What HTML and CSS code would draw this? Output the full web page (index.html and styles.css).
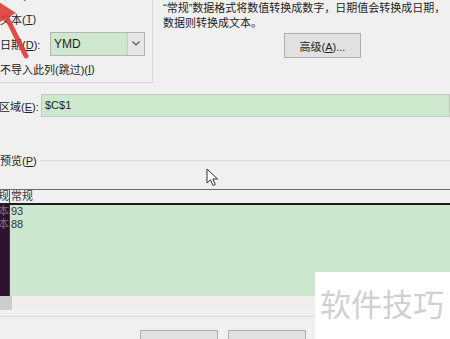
FILE: index.html
```html
<!DOCTYPE html>
<html lang="zh-CN">
<head>
    <meta charset="UTF-8">
    <meta name="viewport" content="width=device-width, initial-scale=1.0">
    <title>文本导入向导</title>
    <link rel="stylesheet" href="styles.css">
</head>
<body>
    <div class="top">
        <div class="format-group">
            <div class="options">
                <div class="opt">常规(<u>G</u>)</div>
                <div class="opt">文本(<u>T</u>)</div>
                <div class="opt">
                    <span class="opt-label">日期(<u>D</u>):</span>
                    <div class="combo">
                        <span class="combo-value">YMD</span>
                        <span class="combo-drop">
                            <svg width="8" height="5" viewBox="0 0 8 5"><path d="M0.5 0.5 L4 4 L7.5 0.5" fill="none" stroke="#555" stroke-width="1.2"/></svg>
                        </span>
                    </div>
                </div>
                <div class="opt">不导入此列(跳过)(<u>I</u>)</div>
            </div>
        </div>
        <div class="info">
            <p>“常规”数据格式将数值转换成数字，日期值会转换成日期，</p>
            <p>数据则转换成文本。</p>
            <button class="win-button advanced">高级(<u>A</u>)...</button>
        </div>
    </div>

    <div class="range">
        <span class="range-label">区域(<u>E</u>):</span>
        <div class="range-input">$C$1</div>
    </div>

    <div class="preview-title">
        <span>预览(<u>P</u>)</span>
        <span class="rule"></span>
    </div>

    <div class="grid">
        <div class="grid-head">
            <div class="cell-a">常规</div>
            <div class="cell-b">常规</div>
        </div>
        <div class="grid-body">
            <div class="col-a">
                <div>文本</div>
                <div>文本</div>
            </div>
            <div class="col-b">
                <div>93</div>
                <div>88</div>
            </div>
        </div>
        <div class="hbar"><span class="thumb"></span></div>
    </div>

    <div class="sep"></div>

    <div class="actions">
        <button class="win-button wide">确定</button>
        <button class="win-button wide">取消</button>
    </div>

    <!-- overlays: annotation arrow, mouse pointer, watermark -->
    <svg class="red-arrow" width="40" height="70" viewBox="0 0 40 70">
        <line x1="26" y1="56" x2="7" y2="18" stroke="#e03c38" stroke-width="5" stroke-linecap="round"/>
        <polygon points="-1,2 16,13 -2,23" fill="#e03c38"/>
    </svg>

    <svg class="pointer" width="13" height="20" viewBox="0 0 13 20">
        <path d="M1 1 L1 15 L4.5 11.8 L7 17.5 L9.3 16.5 L6.9 11 L11.5 11 Z" fill="#fff" stroke="#333" stroke-width="1"/>
    </svg>

    <div class="watermark">软件技巧</div>
</body>
</html>
```

FILE: styles.css
```css
body {
    margin: 0;
    width: 450px;
    height: 339px;
    overflow: hidden;
    position: relative;
    background-color: #f0f0f0;
    font-family: "Liberation Sans", "Noto Sans CJK SC", sans-serif;
    font-size: 11px;
    color: #1e1e1e;
}
u {
    text-decoration: underline;
    text-underline-offset: 1px;
}
.top {
    display: flex;
    height: 83px;
}
.format-group {
    width: 153px;
    height: 83px;
    box-sizing: border-box;
    border-right: 1px solid #d6d6d6;
    border-bottom: 1px solid #d6d6d6;
    overflow: hidden;
    flex-shrink: 0;
}
.options {
    margin-top: -19px;
}
.opt {
    height: 25px;
    display: flex;
    align-items: center;
    white-space: nowrap;
}
.opt-label {
    width: 50px;
}
.combo {
    width: 95px;
    height: 24px;
    box-sizing: border-box;
    border: 1px solid #b4b4b4;
    background-color: #cfe7cf;
    display: flex;
}
.combo-value {
    flex: 1;
    padding-left: 3px;
    font-size: 12px;
    line-height: 22px;
}
.combo-drop {
    width: 16px;
    background-color: #e6e6e6;
    border-left: 1px solid #cacaca;
    display: flex;
    align-items: center;
    justify-content: center;
}
.info {
    flex: 1;
    padding-left: 10px;
    overflow: hidden;
    white-space: nowrap;
}
.info p {
    margin: 0;
    line-height: 15px;
}
.info p:first-child {
    padding-top: 1px;
}
.win-button {
    font-family: inherit;
    font-size: 11px;
    color: #1e1e1e;
    background-color: #e1e1e1;
    border: 1px solid #adadad;
    padding: 0;
}
.advanced {
    display: block;
    width: 77px;
    height: 25px;
    margin: 2px 0 0 121px;
}
.range {
    display: flex;
    align-items: center;
    margin-top: 11px;
    height: 23px;
}
.range-label {
    width: 42px;
    margin-left: -1px;
    white-space: nowrap;
}
.range-input {
    flex: 1;
    height: 23px;
    box-sizing: border-box;
    border: 1px solid #c2c9c2;
    background-color: #cde8cd;
    padding-left: 3px;
    line-height: 20px;
}
.preview-title {
    display: flex;
    align-items: center;
    height: 14px;
    margin-top: 36px;
    white-space: nowrap;
}
.preview-title .rule {
    flex: 1;
    height: 1px;
    margin-left: 3px;
    background-color: #dadada;
}
.grid {
    margin-top: 22px;
    border-top: 1px solid #6a6a6a;
}
.grid-head {
    display: flex;
    height: 13px;
    line-height: 13px;
    border-bottom: 2px solid #1e1e1e;
    color: #333;
}
.cell-a {
    width: 9px;
    border-right: 1px solid #555;
    display: flex;
    justify-content: flex-end;
    overflow: hidden;
    white-space: nowrap;
}
.cell-b {
    padding-left: 1px;
}
.grid-body {
    display: flex;
    height: 91px;
}
.col-a {
    width: 9px;
    background-color: #2b1330;
    border-right: 1px solid #3c3c3c;
    color: #7f6a86;
    line-height: 13px;
    overflow: hidden;
    white-space: nowrap;
    display: flex;
    flex-direction: column;
    align-items: flex-end;
}
.col-b {
    flex: 1;
    background-color: #cde6ce;
    line-height: 13px;
    padding-left: 1px;
    color: #333;
}
.hbar {
    display: flex;
    height: 14px;
    background-color: #f2eeee;
}
.thumb {
    width: 12px;
    background-color: #cdcdcd;
}
.sep {
    height: 1px;
    margin-top: 6px;
    background-color: #dadada;
}
.actions {
    display: flex;
    gap: 10px;
    margin-top: 13px;
    padding-left: 140px;
}
.wide {
    width: 78px;
    height: 23px;
    padding-top: 8px;
    color: #b5b5b5;
}
.red-arrow {
    position: absolute;
    left: 0;
    top: 0;
    opacity: 0.9;
}
.pointer {
    position: absolute;
    left: 206px;
    top: 168px;
}
.watermark {
    position: absolute;
    right: 0;
    bottom: 0;
    width: 130px;
    height: 67px;
    padding-left: 5px;
    background-color: #fff;
    color: #d0d0d0;
    font-family: "Noto Sans CJK SC", sans-serif;
    font-size: 31px;
    line-height: 62px;
}
```
